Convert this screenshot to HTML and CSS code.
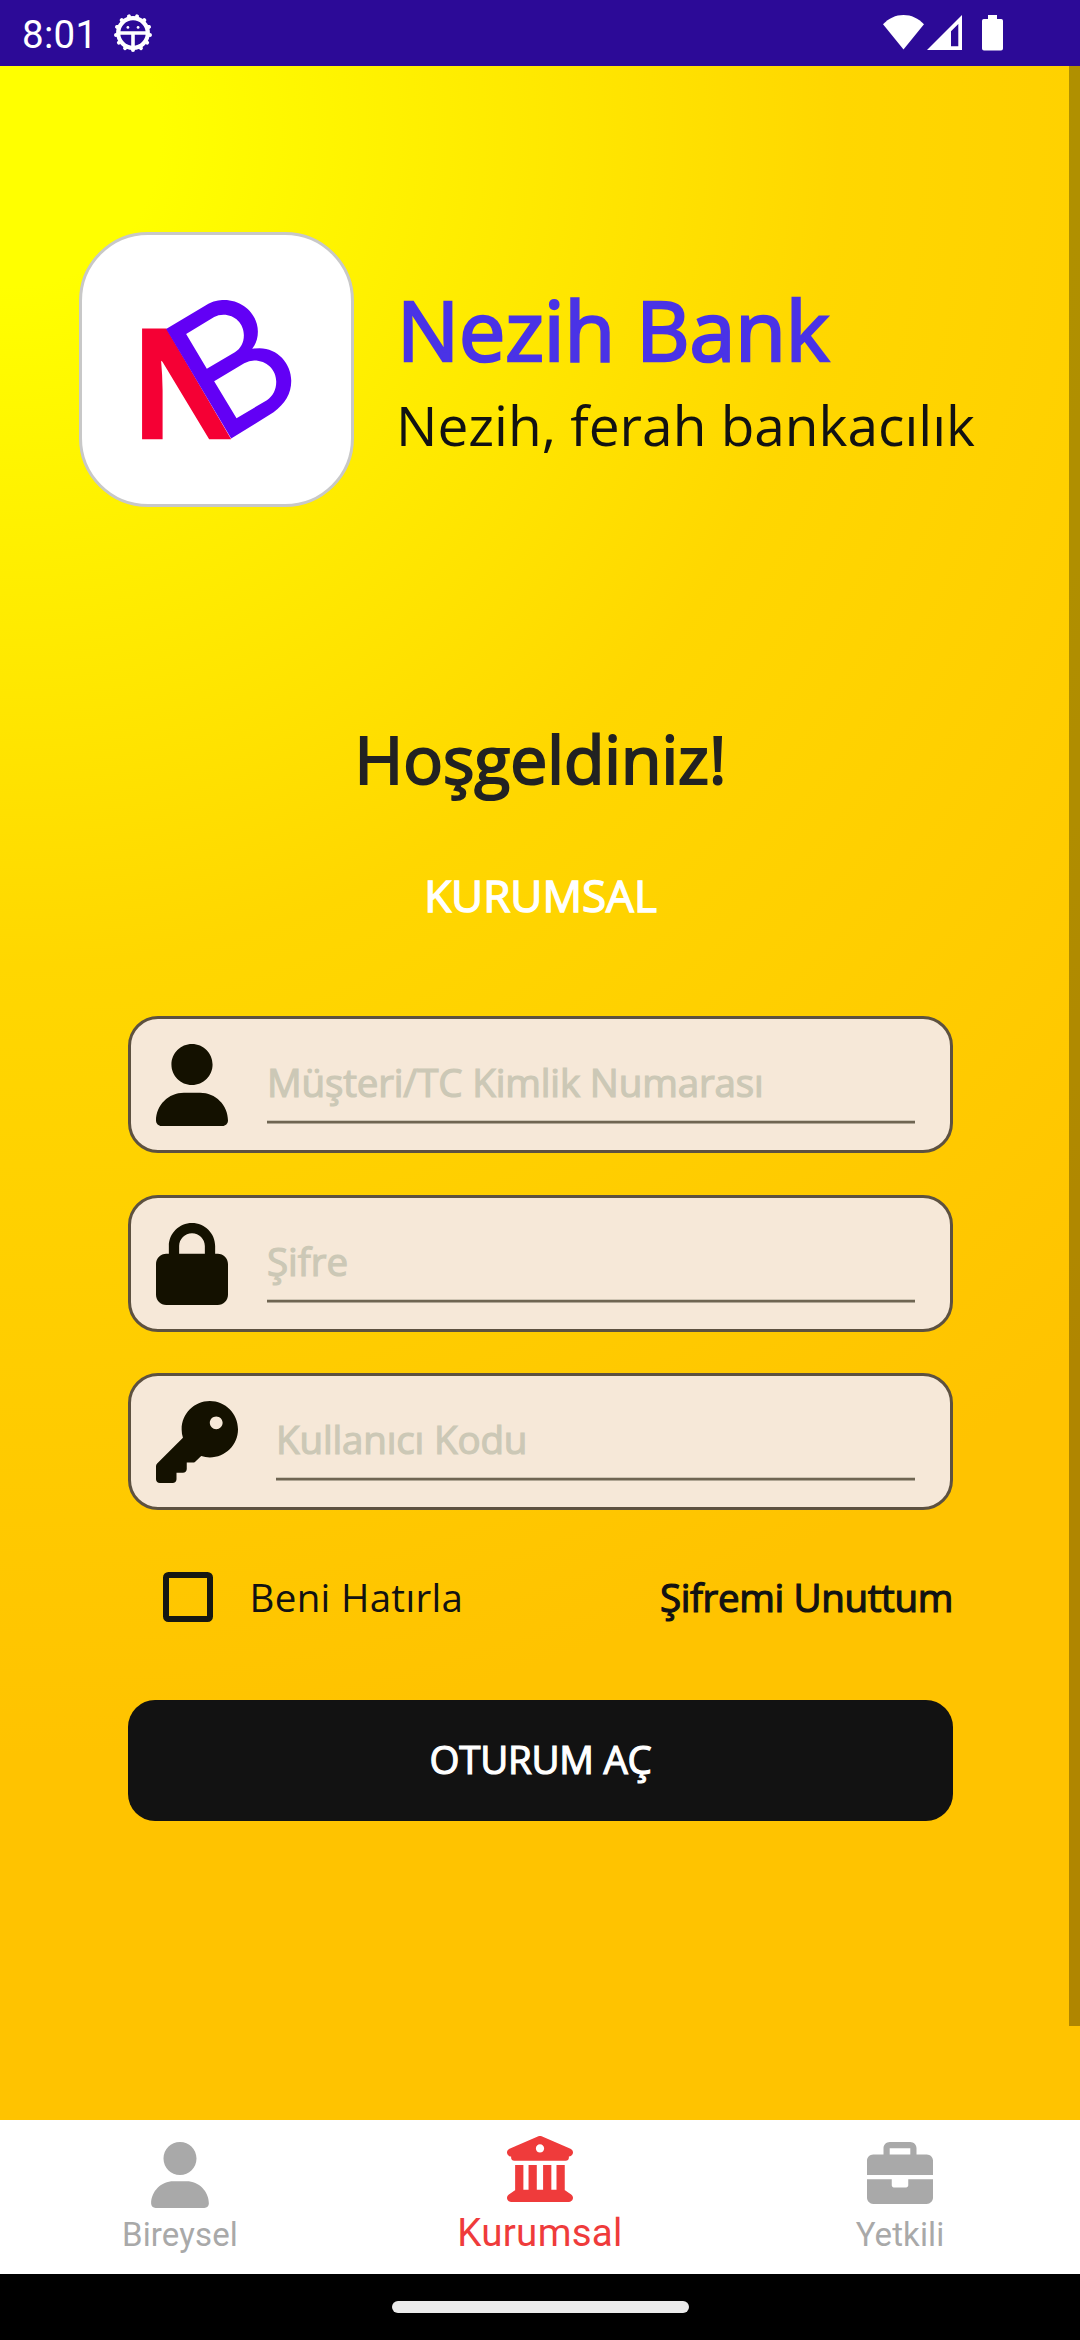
FILE: index.html
```
<!DOCTYPE html>
<html lang="tr">
<head>
<meta charset="utf-8">
<title>Nezih Bank</title>
<link rel="stylesheet" href="styles.css">
</head>
<body>
<div class="screen">
  <header class="status">
    <span class="clock">8:01</span>
    <svg class="gear" viewBox="-20 -20 40 40" width="40" height="40" fill="none" stroke="#fff">
      <circle r="14.8" stroke-width="4.2"/>
      <circle r="17.100" stroke-width="4" stroke-linecap="round" pathLength="130" stroke-dasharray="0.01 9.99" stroke-dashoffset="7.5"/>
      <path d="M-15 0H15M0 0V17" stroke-width="3.600"/>
      <circle cx="-5.1" cy="-5.600" r="1.400" fill="#fff" stroke="none"/>
      <circle cx="5.1" cy="-5.600" r="1.400" fill="#fff" stroke="none"/>
    </svg>
    <div class="signals">
      <svg width="41" height="35" viewBox="0 0 41 35" fill="#fff"><path d="M0 9.3C5.700 3.300 12.700 0 20.500 0S35.300 3.300 41 9.300L20.500 34.600z"/></svg>
      <svg class="cell" width="35" height="35" viewBox="0 0 35 35" fill="#fff"><path fill-rule="evenodd" d="M35 0V35H0zM31.300 9L24 16.200V31.300H31.300z"/></svg>
      <svg class="battery" width="21" height="36" viewBox="0 0 21 36" fill="#fff"><path d="M6 0H15V4H19.200Q21 4 21 5.800V33.600Q21 35.600 19 35.600H2Q0 35.600 0 33.600V5.800Q0 4 1.800 4H6z"/></svg>
    </div>
  </header>

  <main class="app">
    <section class="brand">
      <div class="logo">
        <svg viewBox="57 66 824 824" width="275" height="275">
          <path fill="#f50034" d="M246 355H319L513 687H447L307 455L303 452Q307 495 307.500 540V687H246z"/>
          <path fill="#6200f5" fill-rule="evenodd" d="M318 357L436 286C461 272 476 270 492 270C548 270 593 313 593 364C593 384 588 400 576 416Q588 414 598 414C652 414 693 460 693 512C693 550 674 582 640 606L513 685zM378 372L440 476L524 426C541 415 551 398 551 375C551 341 524 314 490 314Q474 314 462 321zM462 513L529 624L620 570C639 557 648 538 648 515C648 478 619 451 582 451Q567 451 552 459z"/>
        </svg>
      </div>
      <div class="brand-text">
        <h1 class="title">Nezih Bank</h1>
        <p class="tagline">Nezih, ferah bankacılık</p>
      </div>
    </section>

    <h2 class="welcome">Hoşgeldiniz!</h2>
    <p class="segment">KURUMSAL</p>

    <form class="form">
      <label class="field">
        <svg class="icon" width="72" height="82" viewBox="0 0 448 512" preserveAspectRatio="none"><path d="M224 256c70.700 0 128-57.310 128-128s-57.300-128-128-128C153.300 0 96 57.310 96 128S153.300 256 224 256zM274.700 304H173.300C77.610 304 0 381.600 0 477.300c0 19.140 15.520 34.670 34.660 34.670h378.700C432.500 512 448 496.500 448 477.300C448 381.600 370.400 304 274.700 304z"/></svg>
        <span class="entry entry-id">Müşteri/TC Kimlik Numarası</span>
      </label>
      <label class="field">
        <svg class="icon" width="72" height="82" viewBox="0 0 448 512" preserveAspectRatio="none"><path d="M80 192V144C80 64.470 144.500 0 224 0C303.500 0 368 64.470 368 144V192H384C419.300 192 448 220.700 448 256V448C448 483.300 419.300 512 384 512H64C28.650 512 0 483.300 0 448V256C0 220.700 28.650 192 64 192H80zM144 192H304V144C304 99.820 268.200 64 224 64C179.800 64 144 99.820 144 144V192z"/></svg>
        <span class="entry">Şifre</span>
      </label>
      <label class="field">
        <svg class="icon" width="82" height="82" viewBox="0 0 512 512"><path d="M282.300 343.700L248.100 376.100C244.500 381.500 238.400 384 232 384H192V424C192 437.300 181.300 448 168 448H128V488C128 501.300 117.300 512 104 512H24C10.750 512 0 501.300 0 488V408C0 401.600 2.529 395.500 7.029 391L168.300 229.700C162.900 212.800 160 194.700 160 176C160 78.800 238.800 0 336 0C433.200 0 512 78.800 512 176C512 273.200 433.200 352 336 352C317.300 352 299.200 349.100 282.300 343.700zM376 176C398.100 176 416 158.100 416 136C416 113.900 398.100 96 376 96C353.900 96 336 113.900 336 136C336 158.100 353.900 176 376 176z"/></svg>
        <span class="entry entry-code">Kullanıcı Kodu</span>
      </label>
      <div class="options">
        <span class="checkbox"></span>
        <span class="remember">Beni Hatırla</span>
        <span class="forgot">Şifremi Unuttum</span>
      </div>
      <div class="submit">OTURUM AÇ</div>
    </form>
    <div class="scrollbar"></div>
  </main>

  <nav class="tabs">
    <div class="tab">
      <svg width="66" height="66" viewBox="-32 0 512 512"><path d="M224 256c70.700 0 128-57.310 128-128s-57.300-128-128-128C153.300 0 96 57.310 96 128S153.300 256 224 256zM274.700 304H173.300C77.610 304 0 381.600 0 477.300c0 19.140 15.520 34.670 34.660 34.670h378.700C432.500 512 448 496.500 448 477.300C448 381.600 370.400 304 274.700 304z"/></svg>
      <span>Bireysel</span>
    </div>
    <div class="tab active">
      <svg width="66" height="66" viewBox="0 0 512 512"><path d="M243.400 2.587C251.400-.8625 260.600-.8625 268.600 2.587L492.600 98.590C506.600 104.600 514.400 119.600 511.300 134.400C508.300 149.300 495.200 159.100 480 159.100V168C480 181.300 469.300 192 456 192H56C42.750 192 32 181.300 32 168V159.100C16.810 159.100 3.708 149.300 .6528 134.400C-2.402 119.600 5.429 104.600 19.390 98.590L243.400 2.587zM256 128C273.700 128 288 113.700 288 96C288 78.330 273.700 64 256 64C238.300 64 224 78.330 224 96C224 113.700 238.300 128 256 128zM127.100 416H167.100V224H231.100V416H280V224H344V416H384V224H448V420.300C448.600 420.600 449.200 420.100 449.800 421.400L497.800 453.400C509.500 461.200 514.700 475.800 510.600 489.300C506.500 502.800 494.100 512 480 512H31.100C17.900 512 5.458 502.800 1.372 489.300C-2.715 475.800 2.515 461.200 14.250 453.400L62.250 421.400C62.820 420.100 63.410 420.600 63.100 420.300V224H127.100V416z"/></svg>
      <span>Kurumsal</span>
    </div>
    <div class="tab">
      <svg width="66" height="66" viewBox="0 0 512 512"><path d="M320 336c0 8.844-7.156 16-16 16h-96C199.200 352 192 344.800 192 336V288H0v144C0 457.600 22.410 480 48 480h416c25.590 0 48-22.410 48-48V288h-192V336zM464 96H384V48C384 22.410 361.600 0 336 0h-160C150.400 0 128 22.410 128 48V96H48C22.410 96 0 118.400 0 144V256h512V144C512 118.400 489.600 96 464 96zM336 96h-160V48h160V96z"/></svg>
      <span>Yetkili</span>
    </div>
  </nav>

  <footer class="sysnav"><div class="handle"></div></footer>
</div>
</body>
</html>
```
FILE: styles.css
```
* { box-sizing: border-box; }
body { margin: 0; }
h1, h2, p { margin: 0; font-weight: 400; }
svg { display: block; flex: none; }

.screen {
  display: flex;
  flex-direction: column;
  width: 1080px;
  height: 2340px;
  overflow: hidden;
  font-family: "Open Sans", "Noto Sans", sans-serif;
  color: #121212;
  white-space: nowrap;
}

/* Status bar */
.status {
  display: flex;
  align-items: center;
  height: 66px;
  padding: 0 77px 0 22px;
  background: #2c0a97;
  color: #fff;
}
.clock {
  width: 91px;
  padding-top: 3px;
  font: 38.5px/45px Roboto, sans-serif;
  letter-spacing: 0.3px;
}
.signals {
  display: flex;
  align-items: flex-start;
  margin-left: auto;
}
.cell { margin-left: 3px; }
.battery { margin-left: 20px; }

/* Scrolling content */
.app {
  position: relative;
  height: 2054px;
  padding: 166px 127px 0 128px;
  background: radial-gradient(circle at 10px 70px, #ffff00 150px, #ffd700 830px, #ffc300 1620px);
}
.brand {
  display: flex;
  gap: 42px;
  margin-left: -49px;
}
.logo {
  flex: none;
  width: 275px;
  height: 275px;
  border: 3px solid #c8c8c8;
  border-radius: 69px;
  background: #fff;
}
.logo svg { margin: -3px; }
.brand-text { padding-top: 41px; }
.title {
  font-size: 82.5px;
  line-height: 112px;
  letter-spacing: -0.1px;
  padding-left: 1px;
  color: #4a33e6;
}
.tagline {
  margin-top: 2px;
  font-size: 55px;
  line-height: 75px;
}
.title, .welcome, .segment, .entry, .forgot, .submit { -webkit-text-stroke: 0.03125em; }
.welcome, .segment { text-align: center; }
.welcome {
  margin-top: 206px;
  font-size: 66px;
  line-height: 90px;
  color: #222;
}
.segment {
  margin-top: 62px;
  font-size: 44px;
  line-height: 60px;
  color: #fff;
}

/* Login form */
.form {
  margin-top: 91px;
  font-size: 38.5px;
  line-height: 52px;
}
.field {
  display: flex;
  gap: 39px;
  height: 137px;
  margin-bottom: 42px;
  padding: 25px 35px 0 25px;
  border: 3px solid #5d5140;
  border-radius: 30px;
  background: #f6e8d8;
}
.field:nth-child(2) { margin-bottom: 41px; }
.field:nth-child(3) { gap: 38px; margin-bottom: 61px; }
.icon { fill: #141100; }
.entry {
  flex: 1;
  height: 67px;
  margin-top: 12px;
  border-bottom: 2px solid #6f6552;
  box-shadow: 0 1px #b0a695, inset 0 -1px #cfc5b4;
  color: #ccc8b6;
}
.entry-id { letter-spacing: -0.15px; }
.entry-code { letter-spacing: -0.15px; }
.options {
  display: flex;
  align-items: center;
  height: 52px;
  padding-left: 35px;
}
.checkbox {
  width: 50px;
  height: 50px;
  margin-right: 36.5px;
  border: 6px solid #161712;
  border-radius: 5.5px;
}
.remember { letter-spacing: 0.32px; }
.forgot {
  margin-left: auto;
  letter-spacing: -0.36px;
}
.submit {
  height: 121px;
  margin-top: 77px;
  padding-top: 33px;
  border-radius: 27px;
  background: #121212;
  color: #fff;
  text-align: center;
  letter-spacing: -0.25px;
}
.scrollbar {
  position: absolute;
  top: 0;
  right: 0;
  width: 11px;
  height: 1960px;
  background: rgba(0, 0, 0, 0.31);
}

/* Bottom tabs */
.tabs {
  display: grid;
  grid-template-columns: repeat(3, 1fr);
  height: 154px;
  background: #fff;
}
.tab {
  display: flex;
  flex-direction: column;
  align-items: center;
  gap: 7px;
  padding-top: 22px;
  font: 33px/39px Roboto, sans-serif;
  letter-spacing: 0.12px;
  color: #a9a9a9;
  fill: #a9a9a9;
}
.active {
  gap: 8px;
  padding-top: 16px;
  font-size: 38.5px;
  line-height: 45px;
  letter-spacing: 0.3px;
  color: #ef3b3b;
  fill: #ef3b3b;
}

.sysnav {
  display: flex;
  justify-content: center;
  height: 66px;
  padding-top: 27px;
  background: #000;
}
.handle {
  width: 297px;
  height: 12px;
  border-radius: 6px;
  background: #ebebeb;
}
```
